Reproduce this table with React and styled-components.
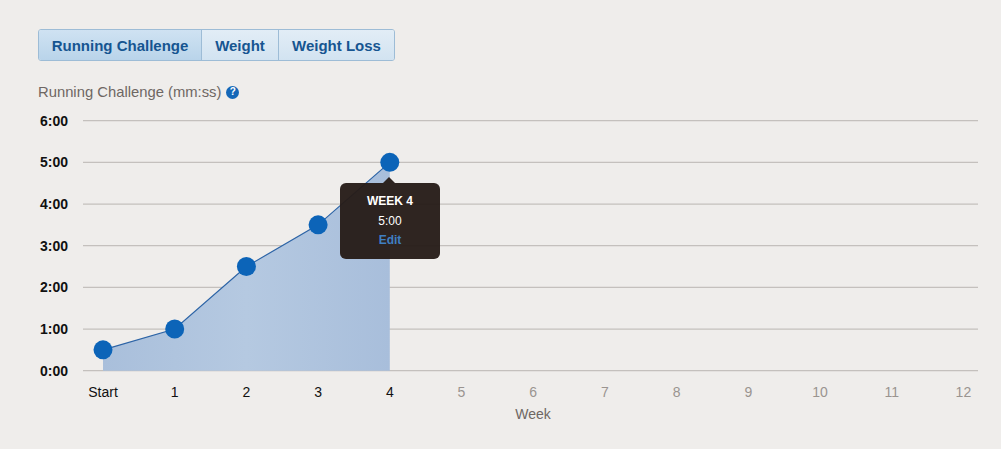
import React from 'react';
import styled, { createGlobalStyle } from 'styled-components';

const GlobalStyle = createGlobalStyle`
  body {
    margin: 0;
    background: #efedeb;
    font-family: "Liberation Sans", Arial, sans-serif;
  }
`;

const Page = styled.div`
  position: relative;
  width: 1001px;
  height: 449px;
  padding-top: 29px;
  box-sizing: border-box;
  overflow: hidden;
`;

const TabBar = styled.div`
  display: flex;
  margin-left: 38px;
  width: max-content;
  border: 1px solid #9dbcd6;
  border-radius: 3px;
  overflow: hidden;
`;

const Tab = styled.button`
  width: ${(p) => p.w}px;
  height: 30px;
  padding: 0;
  border: none;
  border-left: ${(p) => (p.first ? 'none' : '1px solid #9dbcd6')};
  background: ${(p) =>
    p.active
      ? 'linear-gradient(#cfe2f2, #b9d4ea)'
      : 'linear-gradient(#e2edf6, #d2e3f1)'};
  color: #165591;
  font-family: "Liberation Sans", Arial, sans-serif;
  font-weight: bold;
  font-size: 15px;
  cursor: pointer;
`;

const Title = styled.div`
  display: flex;
  align-items: center;
  gap: 5px;
  margin: 23px 0 0 38px;
  height: 16px;
  color: #6e6763;
  font-size: 14.8px;
`;

const Help = styled.span`
  display: inline-flex;
  align-items: center;
  justify-content: center;
  width: 13px;
  height: 13px;
  border-radius: 50%;
  background: #1467b8;
  color: #fff;
  font-size: 10px;
  font-weight: bold;
  line-height: 1;
`;

const Chart = styled.svg`
  display: block;
  margin-top: 8px;
  font-family: "Liberation Sans", Arial, sans-serif;
`;

const Tooltip = styled.div`
  position: absolute;
  left: 340px;
  top: 183px;
  width: 100px;
  height: 76px;
  box-sizing: border-box;
  padding-top: 9px;
  border-radius: 6px;
  background: rgba(38, 28, 24, 0.96);
  color: #fff;
  font-size: 12px;
  text-align: center;
  line-height: 19.5px;

  &::before {
    content: '';
    position: absolute;
    left: 43px;
    top: -6px;
    border: 6px solid transparent;
    border-top: none;
    border-bottom-color: rgba(38, 28, 24, 0.96);
  }
`;

const TipHead = styled.div`
  font-weight: bold;
`;

const TipEdit = styled.div`
  font-weight: bold;
  color: #3f7fc2;
`;

const yTicks = ['6:00', '5:00', '4:00', '3:00', '2:00', '1:00', '0:00'];
const xTicks = ['Start', '1', '2', '3', '4', '5', '6', '7', '8', '9', '10', '11', '12'];
const data = [0.5, 1, 2.5, 3.5, 5];

const yFor = (v) => 370.7 - v * 41.67;
const xFor = (i) => 103 + i * 71.7;

const App = () => {
  const pts = data.map((v, i) => [xFor(i), yFor(v)]);
  const line = pts.map((p) => p.join(',')).join(' ');
  const area = `${line} ${xFor(4)},370.7 ${xFor(0)},370.7`;

  return (
    <Page>
      <GlobalStyle />
      <TabBar>
        <Tab first active w={162}>Running Challenge</Tab>
        <Tab w={77}>Weight</Tab>
        <Tab w={116}>Weight Loss</Tab>
      </TabBar>
      <Title>
        Running Challenge (mm:ss)
        <Help>?</Help>
      </Title>
      <Chart width="1001" height="322" viewBox="0 108 1001 322">
        <defs>
          <linearGradient id="area" x1="0" x2="1" y1="0" y2="0">
            <stop offset="0" stopColor="#a9bfdb" />
            <stop offset="0.5" stopColor="#b5c9e1" />
            <stop offset="1" stopColor="#a8bedb" />
          </linearGradient>
        </defs>
        {yTicks.map((t, i) => {
          const y = 120.7 + i * 41.67;
          return (
            <g key={t}>
              <line x1="83" x2="978" y1={y} y2={y} stroke="#c4c0bd" strokeWidth="1.3" />
              <text x="68" y={y + 5} textAnchor="end" fontSize="14" fontWeight="bold" fill="#111">
                {t}
              </text>
            </g>
          );
        })}
        <polygon points={area} fill="url(#area)" />
        <polyline points={line} fill="none" stroke="#2d64a6" strokeWidth="1.2" />
        {pts.map(([x, y], i) => (
          <circle key={i} cx={x} cy={y} r="9.5" fill="#0c64b8" />
        ))}
        {xTicks.map((t, i) => (
          <text
            key={t}
            x={xFor(i)}
            y="397"
            textAnchor="middle"
            fontSize="14"
            fill={i <= 4 ? '#111' : '#9a9490'}
          >
            {t}
          </text>
        ))}
        <text x="533" y="419" textAnchor="middle" fontSize="14" fill="#6e6763">
          Week
        </text>
      </Chart>
      <Tooltip>
        <TipHead>WEEK 4</TipHead>
        <div>5:00</div>
        <TipEdit>Edit</TipEdit>
      </Tooltip>
    </Page>
  );
};

export default App;
